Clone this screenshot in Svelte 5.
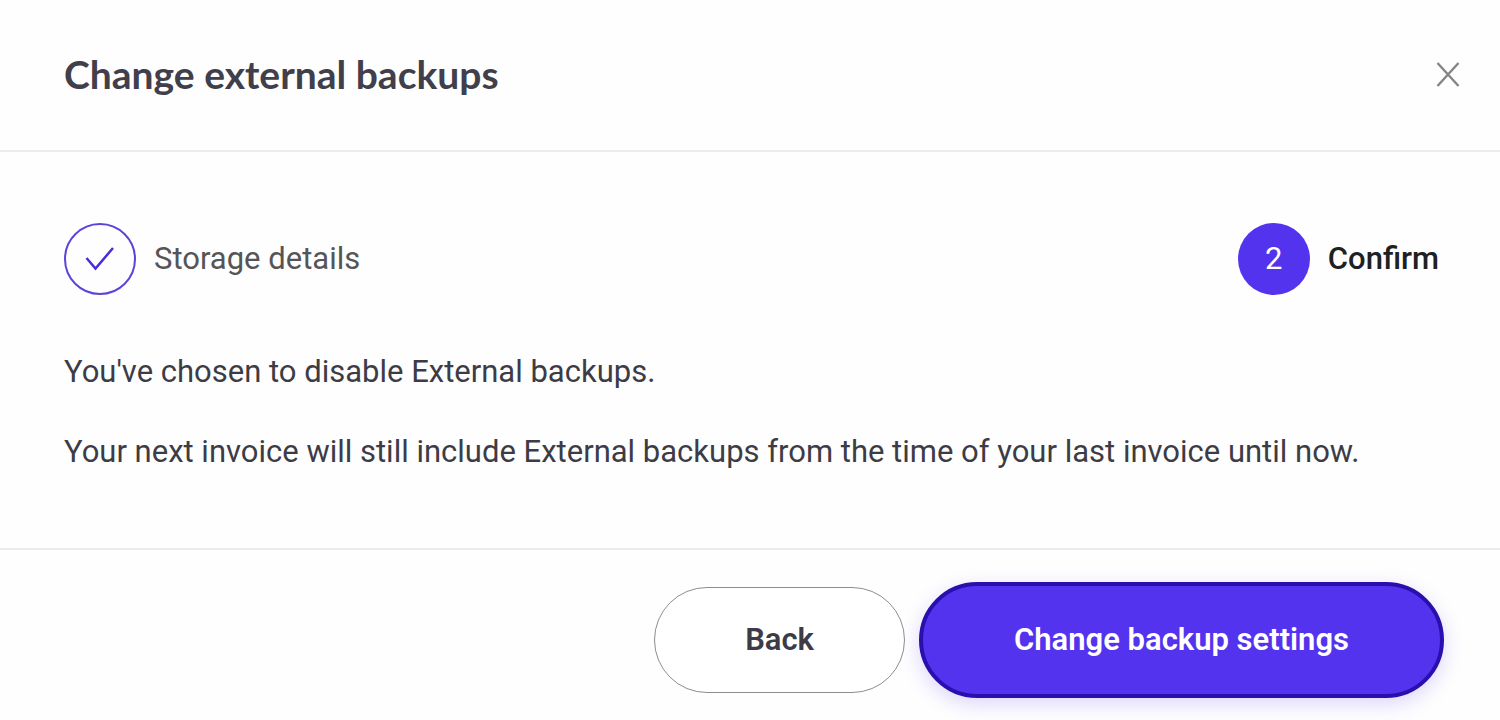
<script>
  const messages = [
    "You've chosen to disable External backups.",
    'Your next invoice will still include External backups from the time of your last invoice until now.'
  ];
</script>

<section class="dialog" role="dialog" aria-labelledby="title">
  <header>
    <h1 id="title">Change external backups</h1>
    <button class="close" type="button" aria-label="Close">
      <svg viewBox="0 0 24 26" width="24" height="26"><path d="M1.5 2 22.5 25M22.5 2 1.5 25" /></svg>
    </button>
  </header>
  <main>
    <ol class="steps">
      <li>
        <span class="dot done">
          <svg viewBox="0 0 30 24" width="30" height="24"><path d="M1.5 11 10.5 21.5 28 1" /></svg>
        </span>
        Storage details
      </li>
      <li class="current" aria-current="step"><span class="dot">2</span>Confirm</li>
    </ol>
    {#each messages as message}
      <p>{message}</p>
    {/each}
  </main>
  <footer>
    <button class="back" type="button">Back</button>
    <button class="primary" type="button">Change backup settings</button>
  </footer>
</section>

<style>
  :global(body) { margin: 0; background: #fefefe; }
  .dialog { font-family: Roboto, sans-serif; font-size: 31px; line-height: 40px; color: #3d3c46; overflow: hidden; }
  header { display: flex; align-items: center; justify-content: space-between; padding: 46px 36px 48px 64px; border-bottom: 2px solid #ececee; }
  h1 { margin: 0; font: 700 39px/56px Lato, sans-serif; color: #403f4b; }
  button { font: inherit; cursor: pointer; }
  .close { display: flex; padding: 4px; border: 0; background: none; }
  svg { fill: none; stroke: currentColor; }
  .close svg { color: #858585; stroke-width: 2.4; }
  main { padding: 71px 61px 76px 64px; }
  .steps { display: flex; justify-content: space-between; margin: 0 0 57px; padding: 0; list-style: none; color: #555557; }
  li { display: flex; align-items: center; gap: 18px; }
  .current { color: #202022; font-weight: 500; }
  .dot { display: flex; align-items: center; justify-content: center; box-sizing: border-box; width: 72px; height: 72px; border-radius: 50%; background: #5333ed; color: #fff; font-weight: 400; }
  .done { border: 2px solid #5c42d8; background: none; color: #4b2bdc; }
  .done svg { stroke-width: 2.5; }
  p { margin: 0 0 40px; }
  p:last-child { margin: 0; }
  footer { display: flex; align-items: center; justify-content: flex-end; gap: 14px; padding: 32px 56px 22px; border-top: 2px solid #ececee; }
  .back, .primary { border-radius: 60px; font-weight: 600; }
  .back { padding: 32px 90px; border: 1px solid #8d8d8d; background: #fff; color: #3d3c46; }
  .primary { padding: 34px 91px; border: 4px solid #2a0fae; background: #5333ed; color: #fff; box-shadow: 0 6px 20px #5333ed33; }
</style>
